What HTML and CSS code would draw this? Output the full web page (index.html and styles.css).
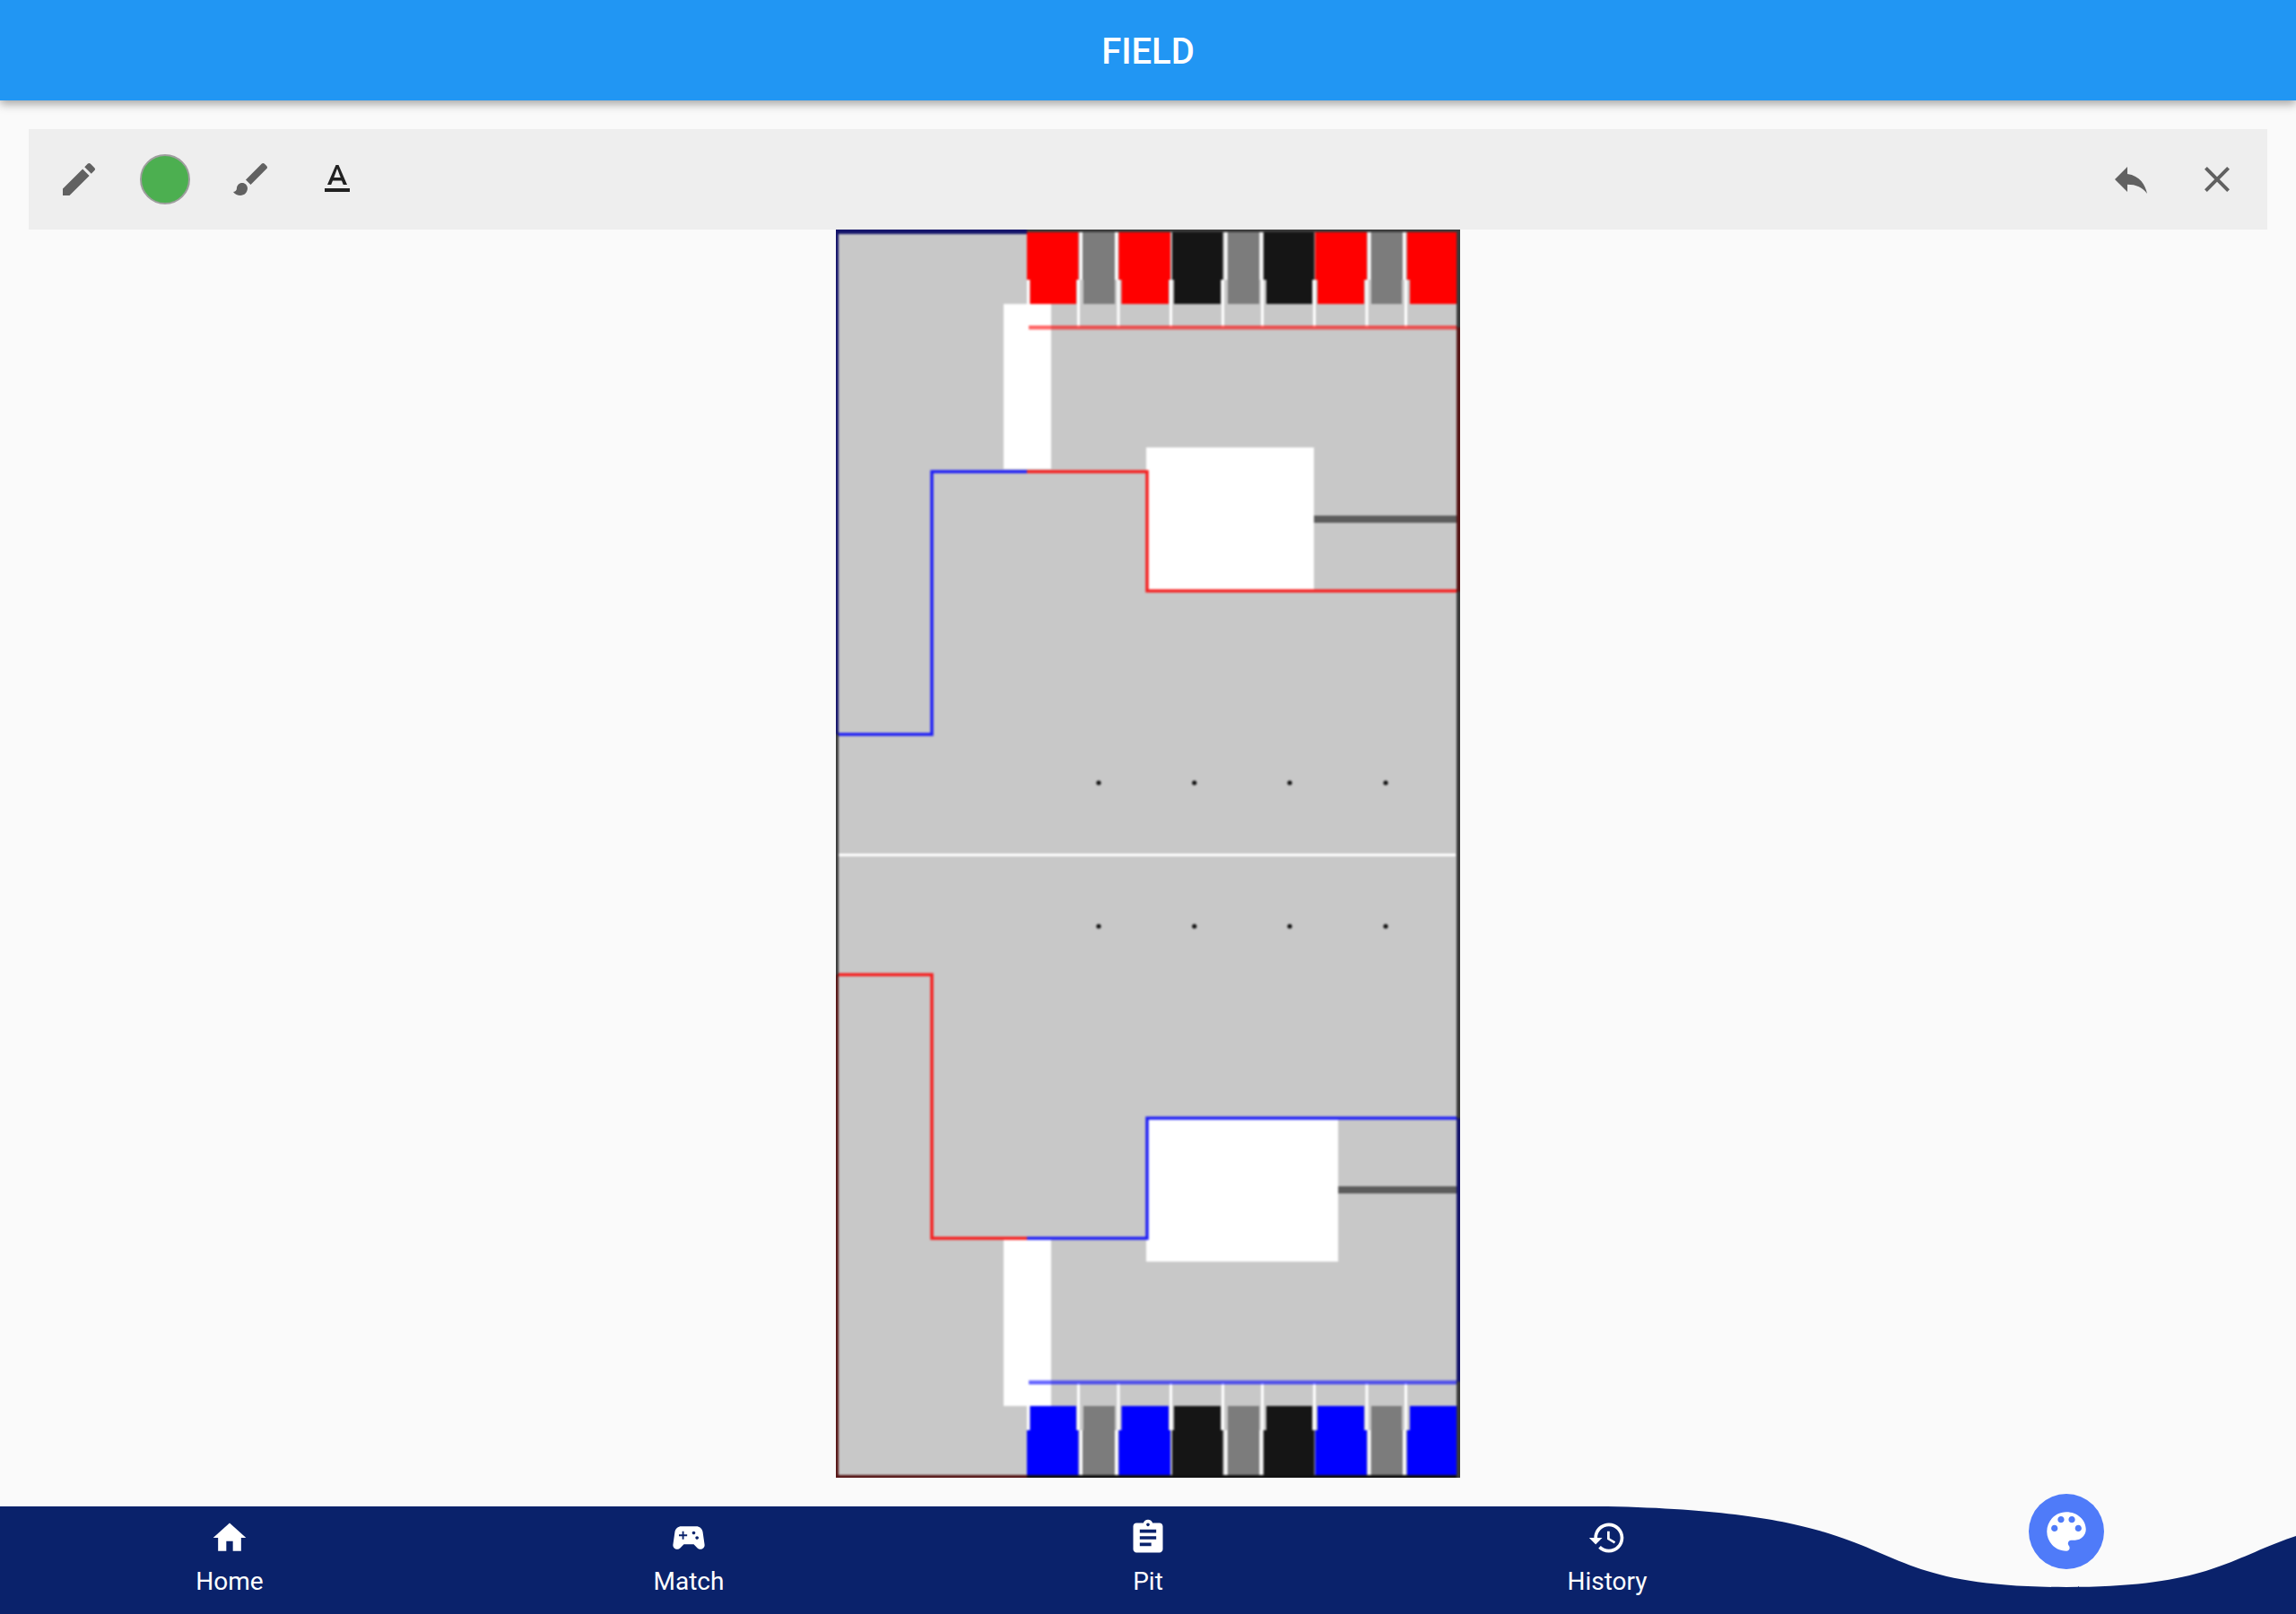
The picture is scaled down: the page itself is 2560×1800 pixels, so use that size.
FILE: index.html
```html
<!DOCTYPE html>
<html lang="en">
<head>
<meta charset="utf-8">
<title>Field</title>
<link rel="stylesheet" href="styles.css">
</head>
<body>
<header class="appbar">FIELD</header>
<main class="content">
  <div class="toolbar">
    <div class="tools">
      <svg class="icon tool-icon" viewBox="0 0 24 24"><path d="M3 17.25V21h3.75L17.81 9.94l-3.75-3.75L3 17.25zM20.71 7.04c.39-.39.39-1.02 0-1.41l-2.34-2.34c-.39-.39-1.02-.39-1.41 0l-1.83 1.83 3.75 3.75 1.83-1.83z"/></svg>
      <span class="swatch"></span>
      <svg class="icon tool-icon" viewBox="0 0 24 24"><path d="M7 14c-1.66 0-3 1.34-3 3 0 1.31-1.16 2-2 2 .92 1.22 2.49 2 4 2 2.21 0 4-1.79 4-4 0-1.66-1.34-3-3-3zm13.71-9.37l-1.34-1.34c-.39-.39-1.02-.39-1.41 0L9 12.25 11.75 15l8.96-8.96c.39-.39.39-1.03 0-1.41z"/></svg>
      <svg class="icon tool-icon dark" viewBox="0 0 24 24"><path d="M5 17v2h14v-2H5zm4.5-4.2h5l.9 2.2h2.1L12.75 4h-1.5L6.5 15h2.1l.9-2.2zM12 5.98L13.87 11h-3.74L12 5.98z"/></svg>
    </div>
    <div class="tools right">
      <svg class="icon tool-icon" viewBox="0 0 24 24"><path d="M10 9V5l-7 7 7 7v-4.1c5 0 8.5 1.6 11 5.1-1-5-4-10-11-11z"/></svg>
      <svg class="icon tool-icon" viewBox="0 0 24 24"><path d="M19 6.41L17.59 5 12 10.59 6.41 5 5 6.41 10.59 12 5 17.59 6.41 19 12 13.41 17.59 19 19 17.59 13.41 12z"/></svg>
    </div>
  </div>

  <svg class="field" viewBox="0 0 696 1392" aria-label="Field map">
    <defs>
      <g id="goal">
        <!-- wide part of the cells -->
        <rect class="team" x="213" y="-9" width="57.4" height="65"/>
        <rect class="gray" x="275" y="-9" width="36" height="65"/>
        <rect class="team" x="315.4" y="-9" width="57.6" height="65"/>
        <rect class="black" x="375" y="-9" width="56.5" height="65"/>
        <rect class="gray" x="436.6" y="-9" width="35.8" height="65"/>
        <rect class="black" x="477" y="-9" width="56.5" height="65"/>
        <rect class="team" x="534.4" y="-9" width="57.6" height="65"/>
        <rect class="gray" x="596.4" y="-9" width="35.6" height="65"/>
        <rect class="team" x="636.8" y="-9" width="60" height="65"/>
        <!-- narrow part of the cells -->
        <rect class="team" x="216.5" y="56" width="51.5" height="27"/>
        <rect class="gray" x="276" y="56" width="35" height="27"/>
        <rect class="team" x="318.5" y="56" width="52.5" height="27"/>
        <rect class="black" x="377" y="56" width="52" height="27"/>
        <rect class="gray" x="437" y="56" width="35" height="27"/>
        <rect class="black" x="480" y="56" width="51" height="27"/>
        <rect class="team" x="537" y="56" width="52" height="27"/>
        <rect class="gray" x="597" y="56" width="34" height="27"/>
        <rect class="team" x="640" y="56" width="56" height="27"/>
        <!-- white dividers -->
        <rect class="white" x="213" y="56" width="3" height="27"/>
        <rect class="white" x="269" y="56" width="3" height="53"/>
        <rect class="white" x="272" y="0" width="3" height="56"/>
        <rect class="white" x="311" y="0" width="3.4" height="56"/>
        <rect class="white" x="313.5" y="56" width="3" height="53"/>
        <rect class="white" x="372" y="56" width="3" height="53"/>
        <rect class="white" x="430" y="56" width="3" height="53"/>
        <rect class="white" x="433.5" y="0" width="3" height="56"/>
        <rect class="white" x="472.4" y="0" width="3" height="56"/>
        <rect class="white" x="474" y="56" width="3" height="53"/>
        <rect class="white" x="532" y="56" width="3" height="53"/>
        <rect class="white" x="590.5" y="56" width="3" height="53"/>
        <rect class="white" x="593.4" y="0" width="3" height="56"/>
        <rect class="white" x="632" y="0" width="3" height="56"/>
        <rect class="white" x="634" y="56" width="3" height="53"/>
        <!-- line under the goal -->
        <rect class="goal-line" x="215" y="107" width="478" height="4.5"/>
      </g>
      <g id="dots">
        <circle cx="293" cy="0" r="2.6"/>
        <circle cx="399.7" cy="0" r="2.6"/>
        <circle cx="506" cy="0" r="2.6"/>
        <circle cx="613" cy="0" r="2.6"/>
      </g>
    </defs>
    <g class="map">
      <rect class="ground" x="-10" y="-10" width="716" height="1412"/>

      <!-- white zones -->
      <rect class="white" x="187" y="83" width="53" height="184"/>
      <rect class="white" x="346" y="243" width="187" height="159"/>
      <rect class="white" x="187" y="1125" width="53" height="187"/>
      <rect class="white" x="346" y="991" width="214" height="160"/>

      <!-- bars -->
      <rect class="bar" x="533" y="319" width="160" height="8"/>
      <rect class="bar" x="560" y="1067" width="133" height="8"/>

      <!-- goals -->
      <use href="#goal" class="red-team"/>
      <use href="#goal" class="blue-team" transform="translate(0 1395) scale(1 -1)"/>

      <!-- zone outlines -->
      <path class="stroke blue" d="M0 563H107V270H213"/>
      <path class="stroke red" d="M213 270H347V403H693"/>
      <path class="stroke red" d="M0 831H107V1125H213"/>
      <path class="stroke blue" d="M213 1125H347V991H693"/>

      <!-- centre line and marks -->
      <rect class="white" x="3" y="696" width="688" height="3"/>
      <use href="#dots" class="dot-row" y="617"/>
      <use href="#dots" class="dot-row" y="777"/>

      <!-- outer border -->
      <rect class="edge-navy" x="-10" y="-10" width="223" height="15"/>
      <rect class="edge-navy" x="-10" y="-10" width="13" height="573"/>
      <rect class="edge-dark" x="-10" y="563" width="13" height="268"/>
      <rect class="edge-maroon" x="-10" y="831" width="13" height="571"/>
      <rect class="edge-maroon" x="-10" y="1389" width="223" height="13"/>
      <rect class="edge-black" x="213" y="1389" width="490" height="13"/>
      <rect class="edge-dark" x="213" y="-10" width="490" height="13"/>
      <rect class="edge-dark" x="692" y="-10" width="14" height="119"/>
      <rect class="edge-maroon" x="692" y="109" width="14" height="295"/>
      <rect class="edge-dark" x="692" y="404" width="14" height="587"/>
      <rect class="edge-navy" x="692" y="991" width="14" height="294"/>
      <rect class="edge-dark" x="692" y="1285" width="14" height="117"/>
    </g>
  </svg>
</main>

<nav class="navbar">
  <svg class="nav-curve" viewBox="0 0 2560 120" aria-hidden="true"><path d="M0 120V0H1792C2150.4 7.5 2048 90 2304 90C2560 90 2457.6 7.5 2816 0V120Z"/></svg>
  <a class="nav-item">
    <svg class="icon nav-icon" viewBox="0 0 24 24"><path d="M10 20v-6h4v6h5v-8h3L12 3 2 12h3v8z"/></svg>
    <span class="nav-label">Home</span>
  </a>
  <a class="nav-item">
    <svg class="icon nav-icon" viewBox="0 0 24 24"><path d="M21.58 16.09l-1.09-7.66C20.21 6.46 18.52 5 16.53 5H7.47C5.48 5 3.79 6.46 3.51 8.43l-1.09 7.66C2.2 17.63 3.39 19 4.94 19c.68 0 1.32-.27 1.8-.75L9 16h6l2.25 2.25c.48.48 1.13.75 1.8.75 1.56 0 2.75-1.37 2.53-2.91zM11 11H9v2H8v-2H6v-1h2V8h1v2h2v1zm4-1c-.55 0-1-.45-1-1s.45-1 1-1 1 .45 1 1-.45 1-1 1zm2 3c-.55 0-1-.45-1-1s.45-1 1-1 1 .45 1 1-.45 1-1 1z"/></svg>
    <span class="nav-label">Match</span>
  </a>
  <a class="nav-item">
    <svg class="icon nav-icon" viewBox="0 0 24 24"><path d="M19 3h-4.18C14.4 1.84 13.3 1 12 1c-1.3 0-2.4.84-2.82 2H5c-1.1 0-2 .9-2 2v14c0 1.1.9 2 2 2h14c1.1 0 2-.9 2-2V5c0-1.1-.9-2-2-2zm-7 0c.55 0 1 .45 1 1s-.45 1-1 1-1-.45-1-1 .45-1 1-1zm2 14H7v-2h7v2zm3-4H7v-2h10v2zm0-4H7V7h10v2z"/></svg>
    <span class="nav-label">Pit</span>
  </a>
  <a class="nav-item">
    <svg class="icon nav-icon" viewBox="0 0 24 24"><path d="M13 3c-4.97 0-9 4.03-9 9H1l3.89 3.89.07.14L9 12H6c0-3.87 3.13-7 7-7s7 3.13 7 7-3.13 7-7 7c-1.93 0-3.68-.79-4.94-2.06l-1.42 1.42C8.27 19.99 10.51 21 13 21c4.97 0 9-4.03 9-9s-4.03-9-9-9zm-1 5v5l4.28 2.54.72-1.21-3.5-2.08V8H12z"/></svg>
    <span class="nav-label">History</span>
  </a>
  <div class="nav-fab-cell">
    <span class="fab">
      <svg class="icon fab-icon" viewBox="0 0 24 24"><path d="M12 3c-4.97 0-9 4.03-9 9s4.03 9 9 9c.83 0 1.5-.67 1.5-1.5 0-.39-.15-.74-.39-1.01-.23-.26-.38-.61-.38-.99 0-.83.67-1.5 1.5-1.5H16c2.76 0 5-2.24 5-5 0-4.42-4.03-8-9-8zm-5.5 9c-.83 0-1.5-.67-1.5-1.5S5.67 9 6.5 9 8 9.67 8 10.5 7.33 12 6.5 12zm3-4C8.67 8 8 7.33 8 6.5S8.67 5 9.5 5s1.5.67 1.5 1.5S10.33 8 9.5 8zm5 0c-.83 0-1.5-.67-1.5-1.5S13.67 5 14.5 5s1.5.67 1.5 1.5S15.33 8 14.5 8zm3 4c-.83 0-1.5-.67-1.5-1.5S16.67 9 17.5 9s1.5.67 1.5 1.5-.67 1.5-1.5 1.5z"/></svg>
    </span>
  </div>
</nav>
</body>
</html>
```
FILE: styles.css
```css
* { box-sizing: border-box; }

html, body { margin: 0; height: 100%; }

body {
  display: flex;
  flex-direction: column;
  width: 2560px;
  height: 1800px;
  overflow: hidden;
  background: #fafafa;
  font-family: Roboto, "Liberation Sans", sans-serif;
}

.appbar {
  position: relative;
  z-index: 2;
  flex: 0 0 112px;
  display: flex;
  align-items: center;
  justify-content: center;
  padding-top: 2px;
  background: #2196f3;
  color: #fff;
  font-size: 40px;
  font-weight: 500;
  box-shadow: 0 4px 10px rgba(0, 0, 0, .35);
}

.content {
  flex: 1 1 auto;
  display: flex;
  flex-direction: column;
  align-items: center;
  padding-top: 32px;
}

.toolbar {
  flex: 0 0 112px;
  width: 2496px;
  display: flex;
  align-items: center;
  justify-content: space-between;
  padding: 0 32px;
  background: #eee;
}

.tools { display: flex; align-items: center; gap: 48px; }
.tools.right { gap: 48px; }

.icon { display: block; fill: currentColor; }

.tool-icon { width: 48px; height: 48px; color: #616161; }
.tool-icon.dark { color: #212121; }

.swatch {
  width: 56px;
  height: 56px;
  margin: 0 -4px;
  border-radius: 50%;
  background: #4caf50;
  border: 2px solid #9e9e9e;
}

.field { display: block; flex: 0 0 1392px; width: 696px; height: 1392px; }

.map { filter: blur(1px); }

.ground { fill: #c8c8c8; }
.white { fill: #fff; }
.bar { fill: #5c5c5c; }
.gray { fill: #7c7c7c; }
.black { fill: #151515; }
.team { fill: currentColor; }
.red-team { color: #f00; }
.blue-team { color: #00f; }
.goal-line { fill: currentColor; opacity: .6; }

.stroke { fill: none; stroke-width: 3.5; }
.stroke.blue { stroke: #1f1ff5; }
.stroke.red { stroke: #f52020; }

.dot-row { fill: #111; }

.edge-navy { fill: #14146a; }
.edge-dark { fill: #3a3a3a; }
.edge-maroon { fill: #551515; }
.edge-black { fill: #111; }

.navbar {
  position: relative;
  flex: 0 0 120px;
  display: grid;
  grid-template-columns: repeat(5, 1fr);
}

.nav-curve {
  position: absolute;
  inset: 0;
  width: 100%;
  height: 100%;
  fill: #0a226b;
}

.nav-item {
  position: relative;
  display: flex;
  flex-direction: column;
  align-items: center;
  padding-top: 13px;
  color: #fff;
}

.nav-icon { width: 44px; height: 44px; }

.nav-label {
  margin-top: 7px;
  font-size: 28px;
  line-height: 40px;
}

.nav-fab-cell { position: relative; display: flex; justify-content: center; }

.fab {
  width: 84px;
  height: 84px;
  margin-top: -14px;
  display: flex;
  align-items: center;
  justify-content: center;
  border-radius: 50%;
  background: #4f7bf9;
  color: #fff;
}

.fab-icon { width: 58px; height: 58px; }
```
